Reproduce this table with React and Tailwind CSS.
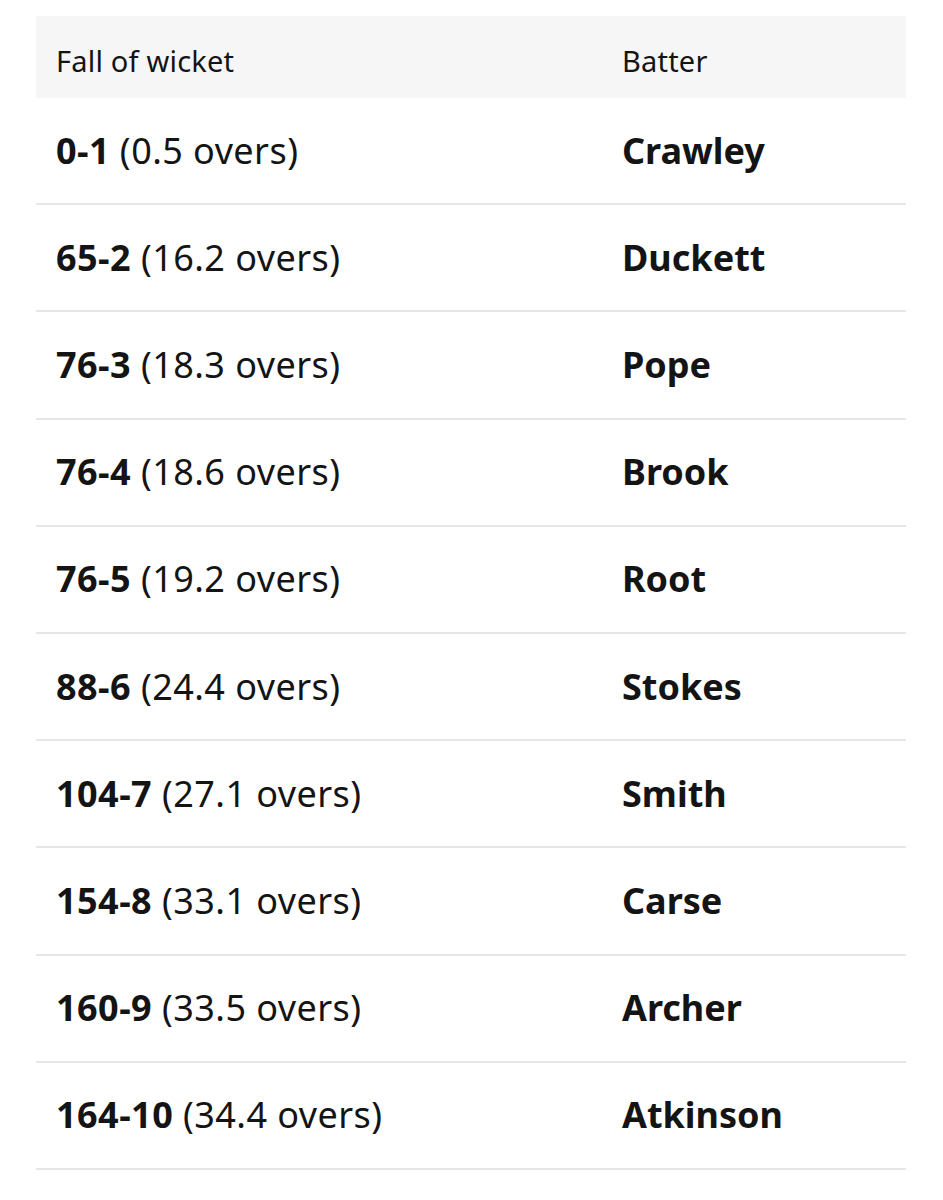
import React from 'react';

const wickets = [
  { score: '0-1', overs: '0.5', batter: 'Crawley' },
  { score: '65-2', overs: '16.2', batter: 'Duckett' },
  { score: '76-3', overs: '18.3', batter: 'Pope' },
  { score: '76-4', overs: '18.6', batter: 'Brook' },
  { score: '76-5', overs: '19.2', batter: 'Root' },
  { score: '88-6', overs: '24.4', batter: 'Stokes' },
  { score: '104-7', overs: '27.1', batter: 'Smith' },
  { score: '154-8', overs: '33.1', batter: 'Carse' },
  { score: '160-9', overs: '33.5', batter: 'Archer' },
  { score: '164-10', overs: '34.4', batter: 'Atkinson' },
];

const App = () => {
  return (
    <div className="min-h-[1200px] bg-white pt-4 pl-9 pr-[37px] text-[#141414] font-['Noto_Sans',sans-serif]">
      {/* Header */}
      <div className="flex h-[82px] items-center bg-[#f6f6f6] pt-2 text-[29px] tracking-[0.2px]">
        <div className="w-[567px] pl-5">Fall of wicket</div>
        <div className="pl-[19px]">Batter</div>
      </div>

      {/* Rows */}
      {wickets.map((w) => (
        <div
          key={w.score}
          className="flex h-[107.2px] items-center border-b-2 border-[#e6e6e6] text-[36px]"
        >
          <div className="w-[567px] pl-5 tracking-[0.45px]">
            <span className="font-bold">{w.score}</span> ({w.overs} overs)
          </div>
          <div className="pl-[19px] font-bold">{w.batter}</div>
        </div>
      ))}
    </div>
  );
};

export default App;
